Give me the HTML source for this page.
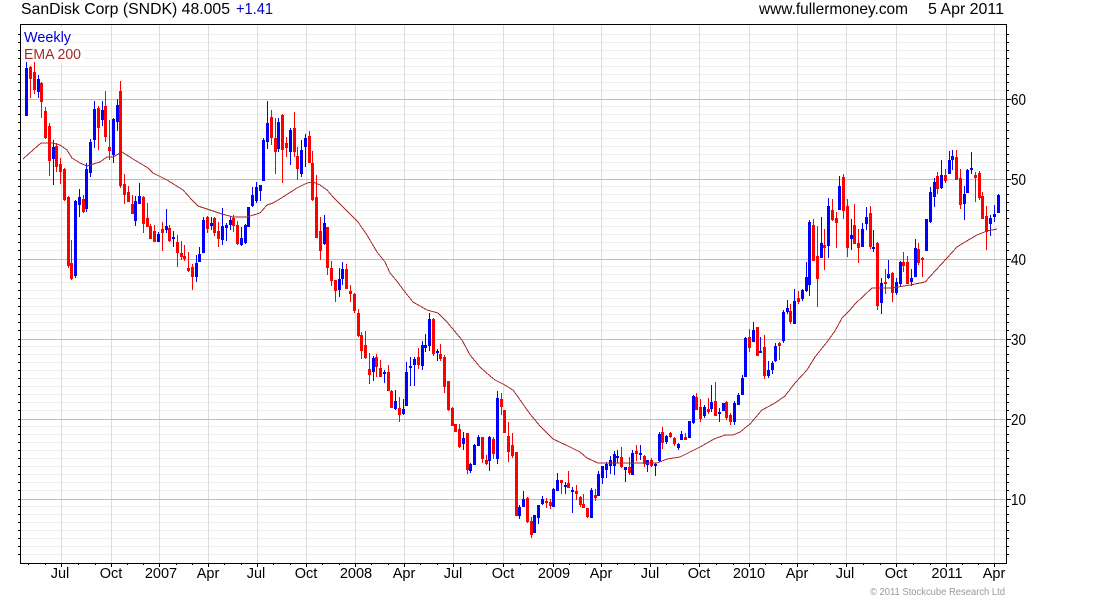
<!DOCTYPE html>
<html><head><meta charset="utf-8"><title>SanDisk Corp (SNDK)</title>
<style>html,body{margin:0;padding:0;background:#fff;width:1100px;height:600px;overflow:hidden}svg{display:block}text{font-family:"Liberation Sans",Arial,sans-serif}</style></head>
<body>
<svg xmlns="http://www.w3.org/2000/svg" width="1100" height="600" viewBox="0 0 1100 600">
<defs><path id="r" d="M0 34H1M0 42H1M0 50H1M0 58H1M0 66H1M0 74H1M0 82H1M0 90H1M0 106H1M0 114H1M0 122H1M0 130H1M0 138H1M0 146H1M0 154H1M0 162H1M0 170H1M0 186H1M0 194H1M0 202H1M0 210H1M0 218H1M0 226H1M0 234H1M0 242H1M0 250H1M0 266H1M0 274H1M0 282H1M0 290H1M0 298H1M0 306H1M0 314H1M0 322H1M0 330H1M0 346H1M0 354H1M0 362H1M0 370H1M0 378H1M0 386H1M0 394H1M0 402H1M0 410H1M0 426H1M0 434H1M0 442H1M0 450H1M0 458H1M0 466H1M0 474H1M0 482H1M0 490H1M0 506H1M0 514H1M0 522H1M0 530H1M0 538H1M0 546H1M0 554H1M0 99H1M0 179H1M0 259H1M0 339H1M0 419H1M0 499H1"/></defs>
<g shape-rendering="crispEdges" fill="none">
<use href="#r" transform="translate(21,.5) scale(985,1)" stroke="#eee"/>
<path stroke="#ddd" d="M61.5 25V563M111.5 25V563M159.5 25V563M208.5 25V563M257.5 25V563M306.5 25V563M355.5 25V563M404.5 25V563M453.5 25V563M503.5 25V563M553.5 25V563M601.5 25V563M650.5 25V563M699.5 25V563M749.5 25V563M797.5 25V563M846.5 25V563M896.5 25V563M946.5 25V563M994.5 25V563"/>
<path stroke="#bdbdbd" d="M21 99.5H1006M21 179.5H1006M21 259.5H1006M21 339.5H1006M21 419.5H1006M21 499.5H1006"/>
<rect x="22" y="27" width="51" height="18" fill="#fff"/><rect x="22" y="45" width="62" height="18" fill="#fff"/>
<use href="#r" transform="translate(18,.5) scale(2,1)" stroke="#000"/>
<use href="#r" transform="translate(1007,.5) scale(2,1)" stroke="#000"/>
<path stroke="#000" d="M1007 99.5H1011M1007 179.5H1011M1007 259.5H1011M1007 339.5H1011M1007 419.5H1011M1007 499.5H1011"/>
<path stroke="#000" d="M28.5 564V565M45.5 564V565M78.5 564V565M95.5 564V565M127.5 564V565M143.5 564V565M176.5 564V565M192.5 564V565M224.5 564V565M241.5 564V565M273.5 564V565M290.5 564V565M322.5 564V565M339.5 564V565M371.5 564V565M388.5 564V565M420.5 564V565M437.5 564V565M470.5 564V565M486.5 564V565M520.5 564V565M537.5 564V565M569.5 564V565M585.5 564V565M617.5 564V565M634.5 564V565M666.5 564V565M683.5 564V565M716.5 564V565M733.5 564V565M765.5 564V565M781.5 564V565M813.5 564V565M830.5 564V565M863.5 564V565M880.5 564V565M913.5 564V565M930.5 564V565M962.5 564V565M978.5 564V565M61.5 564V567M111.5 564V567M159.5 564V567M208.5 564V567M257.5 564V567M306.5 564V567M355.5 564V567M404.5 564V567M453.5 564V567M503.5 564V567M553.5 564V567M601.5 564V567M650.5 564V567M699.5 564V567M749.5 564V567M797.5 564V567M846.5 564V567M896.5 564V567M946.5 564V567M994.5 564V567"/>
<g transform="translate(.5,0)">
<path stroke="#00f" d="M26 62V116M38 75V98M53 140V185M75 200V278M79 189V217M86 163V212M90 139V177M94 101V148M102 101V126M113 118V163M117 99V131M135 196V226M139 183V204M158 232V242M166 209V233M173 231V247M196 255V282M199 247V262M203 217V253M211 217V230M222 208V245M226 223V241M230 217V230M241 227V246M245 224V244M248 207V227M252 187V207M256 182V203M260 185V201M263 138V181M267 101V149M278 118V152M290 128V165M301 140V177M305 134V167M324 215V245M339 268V297M342 262V285M373 356V381M384 370V383M395 390V410M403 399V415M406 362V406M410 357V386M414 357V386M422 341V370M425 334V352M429 313V351M437 349V361M463 432V450M470 463V473M474 444V465M478 435V446M489 436V471M497 391V464M519 505V519M523 491V507M534 515V533M538 505V524M542 496V505M553 488V507M557 473V491M565 482V494M572 487V513M591 488V518M598 471V496M602 466V484M606 462V478M610 456V474M614 451V475M617 450V463M625 467V482M632 450V475M640 445V460M647 460V472M655 463V476M659 432V462M666 435V444M678 443V450M681 431V440M689 421V438M693 395V424M704 405V418M711 385V412M719 408V422M723 403V411M734 401V425M738 393V405M742 375V395M745 337V377M753 322V342M760 337V353M768 361V378M772 361V374M775 343V362M783 310V343M787 300V314M794 289V324M802 289V301M806 262V292M809 220V296M821 217V258M828 198V258M839 176V210M851 219V250M862 223V247M866 207V230M873 230V252M881 278V314M888 260V279M896 278V295M900 261V286M911 269V286M915 239V277M926 219V251M930 187V223M934 178V207M941 160V189M949 151V174M952 150V170M964 186V220M967 169V193M971 152V174M990 215V236M994 205V222M998 194V213"/>
<path stroke="#00f" stroke-width="3" d="M26 68V116M38 79V92M53 147V159M75 201V276M79 197V205M86 169V209M90 142V173M94 109V140M102 110V120M113 119V155M117 105V122M135 201V221M139 196V204M158 234V242M166 226V230M173 237V239M196 263V277M199 254V262M203 220V253M211 223V226M222 226V240M226 225V228M230 220V225M241 238V245M245 225V243M248 207V227M252 195V206M256 187V201M260 185V191M263 140V181M267 123V142M278 122V149M290 130V152M301 150V174M305 138V147M324 223V244M339 279V290M342 269V279M373 358V372M384 372V374M395 401V409M403 409V414M406 372V406M410 366V368M414 359V365M422 345V366M425 345V348M429 319V346M437 351V353M463 438V444M470 464V471M474 445V465M478 437V446M489 437V461M497 398V459M519 507V516M523 499V507M534 515V533M538 505V518M542 499V504M553 489V507M557 480V491M565 485V487M572 490V492M591 490V518M598 474V496M602 466V478M606 464V470M610 460V466M614 454V466M617 456V458M625 467V470M632 453V475M640 453V455M647 460V465M655 464V466M659 434V461M666 436V442M678 444V448M681 434V440M689 421V438M693 396V423M704 407V416M711 402V409M719 412V414M723 403V411M734 403V422M738 395V405M742 378V395M745 338V377M753 330V342M760 351V353M768 370V376M772 363V370M775 346V361M783 312V341M787 308V312M794 301V324M802 290V299M806 277V291M809 222V285M821 243V258M828 206V246M839 186V210M851 235V239M862 229V247M866 217V224M873 247V249M881 283V303M888 274V278M896 282V293M900 262V284M911 278V282M915 248V277M926 219V251M930 192V222M934 182V197M941 175V188M949 160V174M952 156V160M964 194V204M967 170V193M971 168V170M990 218V224M994 214V217M998 195V213"/>
<path stroke="#f00" d="M30 66V98M34 62V94M41 82V118M45 107V139M49 123V176M56 143V172M60 158V184M64 168V201M68 196V268M71 240V280M83 195V213M98 106V150M105 91V142M109 120V160M120 81V188M124 174V204M128 186V202M132 195V214M143 196V233M147 203V227M150 224V239M154 225V242M162 222V251M169 225V242M177 235V267M181 241V260M184 245V261M188 252V272M192 264V290M207 216V233M214 217V236M218 222V247M233 215V232M237 221V245M271 110V145M275 118V174M282 114V183M286 137V157M294 112V157M297 147V180M309 131V163M312 151V201M316 175V238M320 217V260M327 227V275M331 261V286M335 280V302M346 264V289M350 285V302M354 293V313M358 309V337M361 332V359M365 331V359M369 353V384M376 354V377M380 360V377M388 365V391M391 390V408M399 397V422M418 348V369M433 318V356M440 344V361M444 355V393M448 381V411M452 407V426M455 424V432M459 424V448M467 433V474M482 437V463M486 455V465M493 437V459M501 393V415M504 410V433M508 422V462M512 433V458M516 452V516M527 497V523M531 517V538M546 498V508M550 499V509M561 480V494M568 471V488M576 485V500M580 496V507M583 494V508M587 508V518M595 489V501M621 447V468M629 457V475M636 445V461M644 455V467M651 458V467M662 427V449M670 432V438M674 437V446M685 433V440M696 393V410M700 399V422M708 398V414M715 382V416M726 401V420M730 413V425M749 329V352M757 327V356M764 335V379M779 342V360M790 304V324M798 291V304M813 219V261M817 226V307M824 229V270M832 199V221M836 212V248M843 174V219M847 199V257M854 204V244M858 229V263M870 206V249M877 242V310M885 269V294M892 272V302M903 252V272M907 256V284M918 243V265M922 257V277M937 172V194M945 169V183M956 150V180M960 169V209M975 172V202M979 171V200M982 192V219M986 206V250"/>
<path stroke="#f00" stroke-width="3" d="M30 67V79M34 72V90M41 83V102M45 111V138M49 126V161M56 146V167M60 164V172M64 169V200M68 197V266M71 263V279M83 199V212M98 108V128M105 106V137M109 147V151M120 91V186M124 184V195M128 192V202M132 204V214M143 197V224M147 218V227M150 226V239M154 231V242M162 229V233M169 228V241M177 242V253M181 253V257M184 256V259M188 268V271M192 267V277M207 217V229M214 218V233M218 231V239M233 218V226M237 225V244M271 117V138M275 138V152M282 115V150M286 143V148M294 128V152M297 156V169M309 136V163M312 163V200M316 197V238M320 231V251M327 227V268M331 268V281M335 280V291M346 269V289M350 291V294M354 294V311M358 313V336M361 335V351M365 345V358M369 369V375M376 357V367M380 368V377M388 372V391M391 391V408M399 408V415M418 357V365M433 319V354M440 354V359M444 357V387M448 381V410M452 408V426M455 424V432M459 429V447M467 433V470M482 437V459M486 460V464M493 439V454M501 399V407M504 410V433M508 436V452M512 445V456M516 452V516M527 498V522M531 521V535M546 501V503M550 502V506M561 480V483M568 483V488M576 491V494M580 497V505M583 504V508M587 508V517M595 495V498M621 457V467M629 467V473M636 451V454M644 456V464M651 460V466M662 432V443M670 433V437M674 438V444M685 437V440M696 397V410M700 407V419M708 409V412M715 401V416M726 402V418M730 415V422M749 337V348M757 327V356M764 347V376M779 343V346M790 311V322M798 298V302M813 225V261M817 256V279M824 245V248M832 210V220M836 218V223M843 177V211M847 206V248M854 225V244M858 243V248M870 213V247M877 243V306M885 282V284M892 273V293M903 262V266M907 262V284M918 249V263M922 258V260M937 176V189M945 175V181M956 157V180M960 178V205M975 175V178M979 173V198M982 196V219M986 216V232"/>
</g>
<polyline stroke="#a52a2a" stroke-width="1" points="23,159 33,150 41,143 53,143 60,145 67,150 72,158 80,163 87,166 100,162 107,157 113,157 122,152 133,159 148,168 153,173 167,180 183,190 192,200 198,206 210,210 222,214 233,217 247,217 260,213 267,205 273,203 283,197 297,188 307,183 313,182 320,185 327,190 333,197 352,216 358,222 367,235 377,252 385,262 390,273 396,280 405,292 413,302 427,310 438,313 447,322 462,340 470,355 480,367 490,376 495,380 503,384 513,390 518,397 530,414 540,426 553,439 568,446 580,452 587,458 598,463 613,463 633,463 647,463 657,463 667,459 680,457 700,447 714,439 725,435 733,435 740,432 750,424 762,410 775,403 785,396 795,383 807,370 815,357 827,342 835,331 842,318 850,310 855,304 872,288 892,288 910,285 925,282 947,258 957,247 965,242 977,235 987,231 997,229"/>
<rect x="20.5" y="24.5" width="986" height="539" stroke="#000"/>
</g>
<g font-size="15.8" fill="#000">
<text x="21" y="14" textLength="209" lengthAdjust="spacingAndGlyphs">SanDisk Corp (SNDK) 48.005</text>
<text x="236" y="14" textLength="37" lengthAdjust="spacingAndGlyphs" fill="#0000c8">+1.41</text>
<text x="759" y="14" textLength="149" lengthAdjust="spacingAndGlyphs">www.fullermoney.com</text>
<text x="928" y="14" textLength="76" lengthAdjust="spacingAndGlyphs">5 Apr 2011</text>
</g>
<text x="24" y="42" font-size="14.4" fill="#0000c8" textLength="47" lengthAdjust="spacingAndGlyphs">Weekly</text>
<text x="24" y="59" font-size="14.4" fill="#a52a2a" textLength="57" lengthAdjust="spacingAndGlyphs">EMA 200</text>
<g font-size="15.5" fill="#000">
<text x="1011" y="105" textLength="15" lengthAdjust="spacingAndGlyphs">60</text><text x="1011" y="185" textLength="15" lengthAdjust="spacingAndGlyphs">50</text><text x="1011" y="265" textLength="15" lengthAdjust="spacingAndGlyphs">40</text><text x="1011" y="345" textLength="15" lengthAdjust="spacingAndGlyphs">30</text><text x="1011" y="425" textLength="15" lengthAdjust="spacingAndGlyphs">20</text><text x="1011" y="505" textLength="15" lengthAdjust="spacingAndGlyphs">10</text>
</g>
<g font-size="14.5" fill="#000" text-anchor="middle">
<text x="60" y="578">Jul</text><text x="111" y="578">Oct</text><text x="161" y="578">2007</text><text x="208" y="578">Apr</text><text x="256" y="578">Jul</text><text x="306" y="578">Oct</text><text x="356" y="578">2008</text><text x="404" y="578">Apr</text><text x="453" y="578">Jul</text><text x="503" y="578">Oct</text><text x="554" y="578">2009</text><text x="601" y="578">Apr</text><text x="650" y="578">Jul</text><text x="699" y="578">Oct</text><text x="749" y="578">2010</text><text x="797" y="578">Apr</text><text x="845" y="578">Jul</text><text x="896" y="578">Oct</text><text x="947" y="578">2011</text><text x="994" y="578">Apr</text>
</g>
<text x="870" y="595" font-size="10" fill="#999" textLength="135" lengthAdjust="spacingAndGlyphs">© 2011 Stockcube Research Ltd</text>
</svg>
</body></html>
